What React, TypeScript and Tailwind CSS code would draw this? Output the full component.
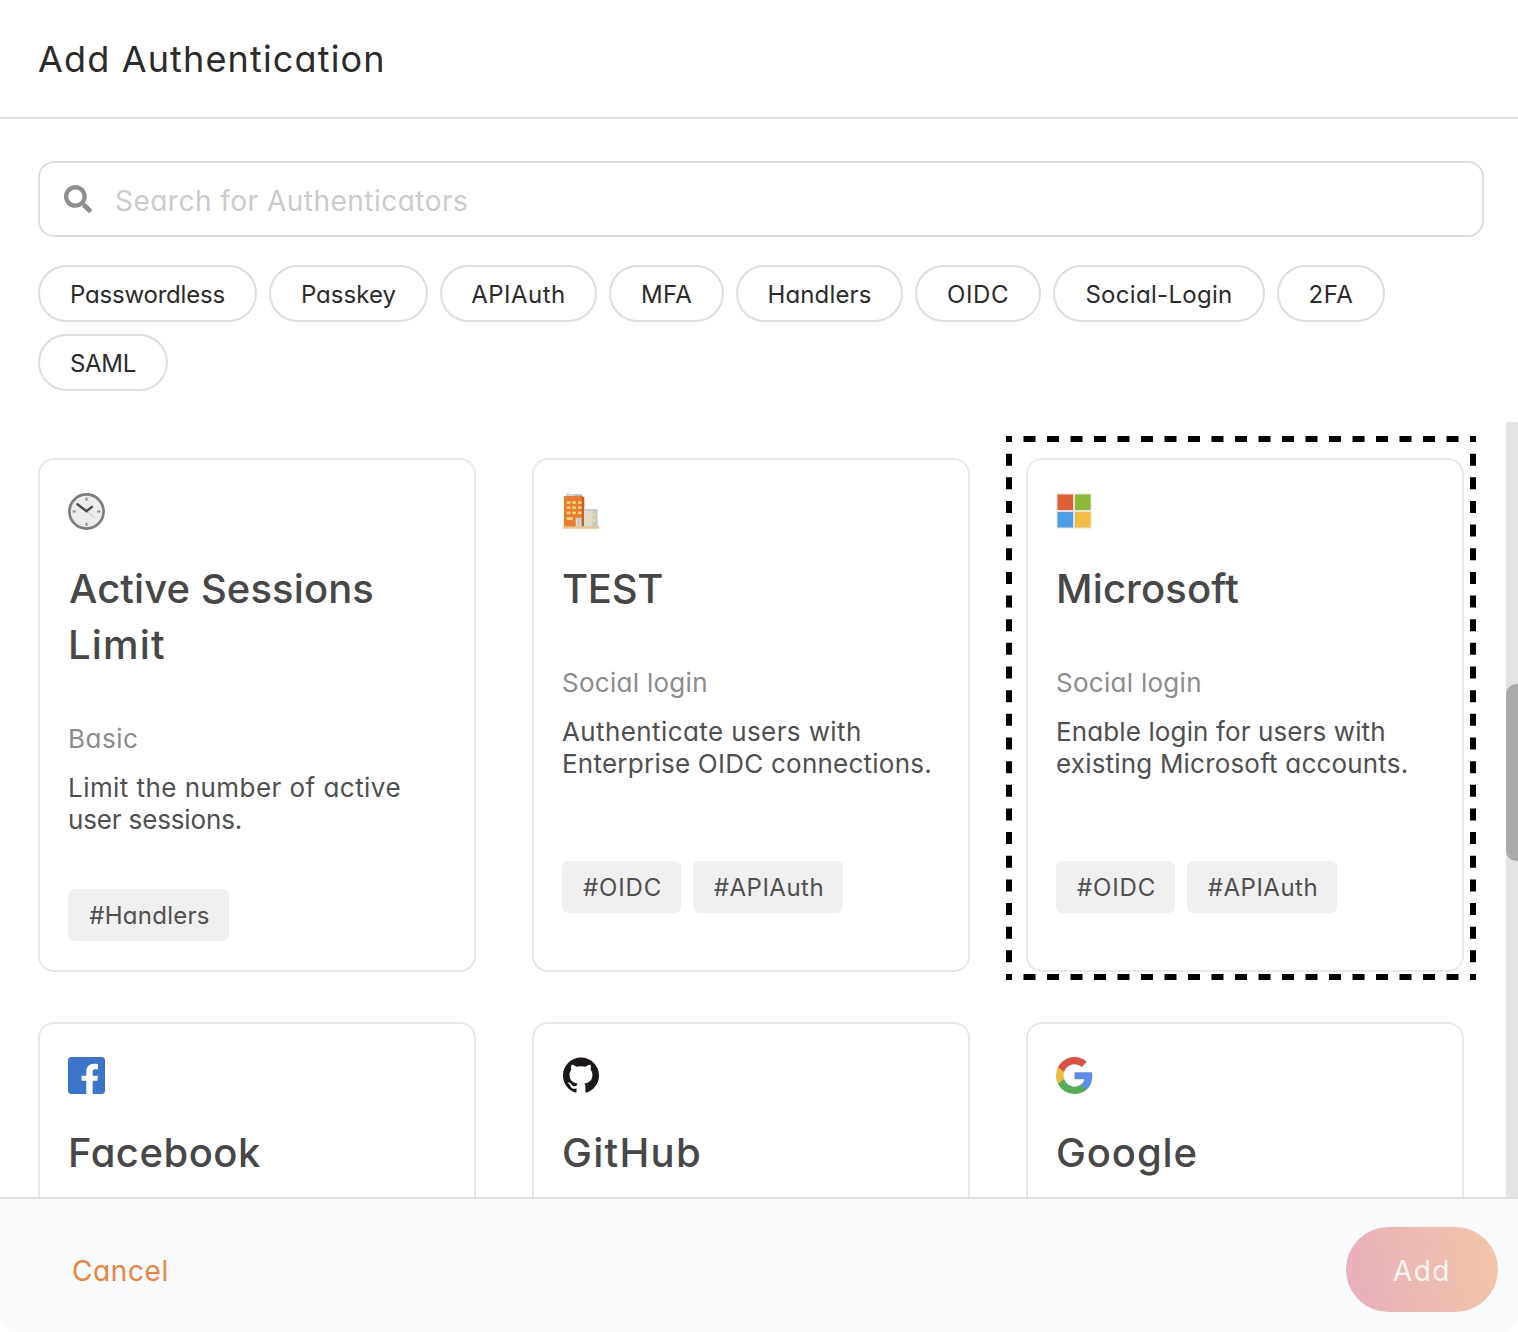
import React from "react";
import { FaSearch } from "react-icons/fa";
import { SiGithub } from "react-icons/si";

const pills = [
  { label: "Passwordless", box: "w-[219px] tracking-[-0.2px]" },
  { label: "Passkey", box: "w-[159px] tracking-[0.05px]" },
  { label: "APIAuth", box: "w-[157px] tracking-[0.5px]" },
  { label: "MFA", box: "w-[115px] tracking-[0.2px]" },
  { label: "Handlers", box: "w-[167px] tracking-[0.15px]" },
  { label: "OIDC", box: "w-[126px] tracking-[0.6px]" },
  { label: "Social-Login", box: "w-[212px] tracking-[0.3px]" },
  { label: "2FA", box: "w-[108px] tracking-[0.6px]" },
  { label: "SAML", box: "w-[130px] tracking-[-0.3px]" },
];

function ClockIcon() {
  return (
    <svg viewBox="0 0 36 36" className="size-[37px]">
      <circle cx="18" cy="18" r="16.6" fill="#ececec" stroke="#7e7e7e" strokeWidth="2.6" />
      <g fill="#8f8f8f">
        <rect x="17" y="4.5" width="2" height="3" />
        <rect x="17" y="29" width="2" height="3" />
        <rect x="4.5" y="17" width="3" height="2" />
        <rect x="28.5" y="17" width="3" height="2" />
      </g>
      <path d="M18 17.5 L26 24" stroke="#cfcfcf" strokeWidth="1.2" />
      <path d="M9.2 11 L18 17.7 L23.2 13.5" fill="none" stroke="#4b4b4b" strokeWidth="2.4" strokeLinecap="round" />
    </svg>
  );
}

function BuildingIcon() {
  return (
    <svg viewBox="0 0 36 36" className="ml-px size-9">
      <path d="M3 0.5 L19 1.5 V5 H3z" fill="#cfd8d8" />
      <path d="M12 1.3 L19 1.5 V5 H12z" fill="#aebcbc" />
      <rect x="1" y="3" width="19" height="31" fill="#ee7a2f" />
      <rect x="18.5" y="4" width="2.8" height="30" fill="#c95f22" />
      <rect x="21.3" y="16.5" width="13" height="17.5" fill="#d6dedc" />
      <rect x="29.5" y="16.5" width="5" height="17.5" fill="#bfc9c6" />
      <path d="M21.3 16h13v2h-13z" fill="#c3cdca" />
      <g fill="#fbdc76">
        {[8.2, 13.4, 18.6].map((y) =>
          [3.8, 9.3, 15].map((x) => <rect key={`${x}-${y}`} x={x} y={y} width="3.6" height="2.6" />),
        )}
        <rect x="3.8" y="24.2" width="6" height="2.8" />
        {[20.6, 26].map((y) =>
          [24, 29.5].map((x) => <rect key={`${x}-${y}`} x={x} y={y} width="3" height="2.8" />),
        )}
      </g>
      <rect x="12.7" y="24.8" width="5.8" height="9.2" fill="#cfd6d6" />
      <rect x="15.3" y="24.8" width="1" height="9.2" fill="#b4bcbc" />
      <rect x="0" y="33.3" width="36" height="2.4" fill="#e8c684" />
    </svg>
  );
}

function MicrosoftIcon() {
  return (
    <svg viewBox="0 0 36 36" className="size-9">
      <rect x="0.5" y="0.5" width="35" height="35" fill="#e6e3dc" />
      <rect x="1.5" y="1.5" width="15.5" height="15.5" fill="#e05f36" />
      <rect x="19" y="1.5" width="15.5" height="15.5" fill="#8eb936" />
      <rect x="1.5" y="19" width="15.5" height="15.5" fill="#4a9fe8" />
      <rect x="19" y="19" width="15.5" height="15.5" fill="#f4bc43" />
    </svg>
  );
}

function FacebookIcon() {
  return (
    <svg viewBox="0 0 36 36" className="size-[37px]">
      <rect width="36" height="36" rx="3.5" fill="#3a74cb" />
      <path
        d="M17.8 36V23.2H13.2V18.3H17.8V14.2C17.8 9.6 20.6 6.6 25.2 6.6C27 6.6 28.6 6.8 29.2 6.9V11.8H26.6C24.3 11.8 24 13.2 24 14.8V18.3H29.2L28.5 23.2H24V36Z"
        fill="#fff"
      />
    </svg>
  );
}

function GoogleIcon() {
  return (
    <svg viewBox="0 0 18 18" className="size-[37px]">
      <path fill="#5c8ced" d="M17.64 9.2c0-.64-.06-1.25-.16-1.84H9v3.48h4.84a4.14 4.14 0 0 1-1.8 2.72v2.26h2.92c1.7-1.57 2.68-3.88 2.68-6.62z" />
      <path fill="#55ad56" d="M9 18c2.43 0 4.47-.8 5.96-2.18l-2.92-2.26c-.8.54-1.84.86-3.04.86-2.34 0-4.33-1.58-5.04-3.71H.96v2.33A9 9 0 0 0 9 18z" />
      <path fill="#efbc3f" d="M3.96 10.71A5.41 5.41 0 0 1 3.68 9c0-.6.1-1.17.28-1.71V4.96H.96A9 9 0 0 0 0 9c0 1.45.35 2.83.96 4.04l3-2.33z" />
      <path fill="#dc5143" d="M9 3.58c1.32 0 2.51.45 3.44 1.35l2.58-2.59A9 9 0 0 0 .96 4.96l3 2.33C4.67 5.16 6.66 3.58 9 3.58z" />
    </svg>
  );
}

type Line = { text: string; spacing: string };

type Card = {
  icon: React.ReactNode;
  title: Line[];
  kind?: Line;
  body?: Line[];
  tagGap?: string;
  tags?: { text: string; box: string }[];
  highlighted?: boolean;
};

const oidcTags = [
  { text: "#OIDC", box: "w-[119px] tracking-[0.85px]" },
  { text: "#APIAuth", box: "w-[150px] tracking-[0.5px]" },
];

const cards: Card[] = [
  {
    icon: <ClockIcon />,
    title: [
      { text: "Active Sessions", spacing: "ml-px tracking-[0.1px]" },
      { text: "Limit", spacing: "tracking-[1.2px]" },
    ],
    kind: { text: "Basic", spacing: "tracking-[0.5px]" },
    body: [
      { text: "Limit the number of active", spacing: "tracking-[0.45px]" },
      { text: "user sessions.", spacing: "tracking-[-0.15px]" },
    ],
    tagGap: "mt-[54px]",
    tags: [{ text: "#Handlers", box: "w-[161px] tracking-[0.25px]" }],
  },
  {
    icon: <BuildingIcon />,
    title: [{ text: "TEST", spacing: "tracking-[-0.3px]" }],
    kind: { text: "Social login", spacing: "tracking-[0.28px]" },
    body: [
      { text: "Authenticate users with", spacing: "tracking-[0.4px]" },
      { text: "Enterprise OIDC connections.", spacing: "tracking-[0.24px]" },
    ],
    tagGap: "mt-[82px]",
    tags: oidcTags,
  },
  {
    icon: <MicrosoftIcon />,
    title: [{ text: "Microsoft", spacing: "tracking-[0.15px]" }],
    kind: { text: "Social login", spacing: "tracking-[0.28px]" },
    body: [
      { text: "Enable login for users with", spacing: "tracking-[0.12px]" },
      { text: "existing Microsoft accounts.", spacing: "tracking-[0.19px]" },
    ],
    tagGap: "mt-[82px]",
    tags: oidcTags,
    highlighted: true,
  },
  { icon: <FacebookIcon />, title: [{ text: "Facebook", spacing: "tracking-[0.5px]" }] },
  { icon: <SiGithub className="ml-px size-9 text-[#1b1817]" />, title: [{ text: "GitHub", spacing: "tracking-[1.3px]" }] },
  { icon: <GoogleIcon />, title: [{ text: "Google", spacing: "tracking-[0.9px]" }] },
];

function DashedOutline() {
  return (
    <svg
      className="pointer-events-none absolute -top-6 -left-[22px] h-[544px] w-[470px]"
      viewBox="0 0 470 544"
      stroke="#000"
      strokeWidth="6"
    >
      <path d="M0 3H470M0 541H470" strokeDasharray="12 11.5" strokeDashoffset="6" />
      <path d="M3 0V544M467 0V544" strokeDasharray="12 11.652" strokeDashoffset="6" />
    </svg>
  );
}

function AuthCard({ card }: { card: Card }) {
  return (
    <article className="relative h-[514px] rounded-2xl border-2 border-[#e8e8e8] bg-white px-[28px] pt-[33px]">
      {card.highlighted && <DashedOutline />}
      <div className="h-9">{card.icon}</div>
      <h2 className="mt-[32px] text-[40px] leading-[56px] font-medium whitespace-nowrap text-[#474747]">
        {card.title.map((l) => (
          <span key={l.text} className={`block ${l.spacing}`}>{l.text}</span>
        ))}
      </h2>
      {card.kind && (
        <p className={`mt-[50px] text-[26px] leading-[31px] text-[#8c8c8c] ${card.kind.spacing}`}>{card.kind.text}</p>
      )}
      {card.body && (
        <p className="mt-[18px] text-[26px] leading-[31.5px] whitespace-nowrap text-[#4f4f4f]">
          {card.body.map((l) => (
            <span key={l.text} className={`block ${l.spacing}`}>{l.text}</span>
          ))}
        </p>
      )}
      {card.tags && (
        <div className={`flex gap-3 ${card.tagGap}`}>
          {card.tags.map((t) => (
            <span
              key={t.text}
              className={`flex h-[52px] items-center justify-center rounded-md bg-[#f0f0f0] pt-0.5 pl-0.5 text-2xl text-[#4f4f4f] ${t.box}`}
            >
              {t.text}
            </span>
          ))}
        </div>
      )}
    </article>
  );
}

export default function App() {
  return (
    <main
      className="flex h-[1332px] w-[1518px] flex-col overflow-hidden bg-white font-['Inter',sans-serif] font-normal"
      style={{ fontFeatureSettings: '"cv11" 1' }}
    >
      <header className="flex h-[119px] shrink-0 items-center border-b-2 border-[#dedede] px-[38px]">
        <h1 className="text-[36px] leading-none tracking-[1.15px] text-[#2b2b2b]">Add Authentication</h1>
      </header>

      <section className="h-[303px] shrink-0 px-[38px] pt-[42px]">
        <label className="flex h-[76px] w-[1446px] items-center rounded-2xl border-2 border-[#dddddd] pl-6">
          <FaSearch className="size-7 text-[#8f8f8f]" />
          <input
            type="text"
            placeholder="Search for Authenticators"
            className="ml-[23px] flex-1 pt-[3px] text-[28px] tracking-[0.48px] outline-none placeholder:text-[#cbcbcb]"
          />
        </label>
        <div className="mt-7 flex flex-wrap gap-3">
          {pills.map((p) => (
            <button
              key={p.label}
              className={`flex h-[57px] items-center justify-center rounded-full border-2 border-[#dedede] pt-0.5 text-2xl text-[#2b2b2b] ${p.box}`}
            >
              {p.label}
            </button>
          ))}
        </div>
      </section>

      <section className="flex min-h-0 flex-1 justify-between overflow-hidden">
        <div className="grid h-fit grid-cols-[438px_438px_438px] gap-x-14 gap-y-[50px] pt-9 pl-[38px]">
          {cards.map((c) => (
            <AuthCard key={c.title[0].text} card={c} />
          ))}
        </div>
        <div className="w-3 bg-[#e4e4e4] pt-[262px]">
          <div className="h-[177px] rounded-l-[10px] bg-[#ababab]" />
        </div>
      </section>

      <footer className="flex h-[135px] shrink-0 items-start justify-between rounded-b-2xl border-t-2 border-[#dcdee0] bg-[#f9fafc] pt-7 pr-5 pl-[72px]">
        <button className="h-[85px] pt-0.5 text-[28px] tracking-[0.6px] text-[#f0833c]">Cancel</button>
        <button className="h-[85px] w-[152px] rounded-full bg-[linear-gradient(80deg,#eab0bb_10%,#f2c3aa_90%)] pt-0.5 text-[28px] tracking-[1.4px] text-white/85">
          Add
        </button>
      </footer>
    </main>
  );
}
